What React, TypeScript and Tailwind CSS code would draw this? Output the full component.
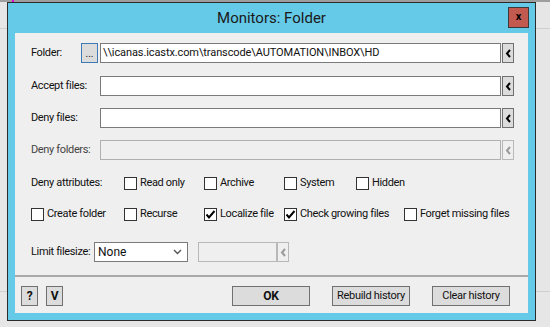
import React from 'react'

const FONT = { fontFamily: 'Roboto, "Liberation Sans", sans-serif' }

function Arrow({ disabled }: { disabled?: boolean }) {
  return (
    <div className={`w-[12px] h-[20px] shrink-0 flex items-center justify-center border ${disabled ? 'border-[#b8b8b8] bg-[#efefef]' : 'border-[#707070] bg-[#dcdcdc]'}`}>
      <svg width="7" height="9" viewBox="0 0 7 9">
        <path d="M5 1 L2 4.5 L5 8" fill="none" stroke={disabled ? '#9a9a9a' : '#000'} strokeWidth="2" />
      </svg>
    </div>
  )
}

function Check({ label, checked, w }: { label: string; checked?: boolean; w: string }) {
  return (
    <div className={`flex items-center gap-[3px] shrink-0 ${w}`}>
      <div className="w-[13px] h-[13px] border border-[#333] bg-white flex items-center justify-center shrink-0">
        {checked && (
          <svg width="11" height="11" viewBox="0 0 11 11">
            <path d="M1.5 5.5 L4 8.5 L9.5 2" fill="none" stroke="#000" strokeWidth="2" />
          </svg>
        )}
      </div>
      <span className="text-[11px] tracking-[-0.35px] text-[#111] whitespace-nowrap">{label}</span>
    </div>
  )
}

function FieldRow({ label, disabled, mt }: { label: string; disabled?: boolean; mt: string }) {
  return (
    <div className={`flex items-center h-[20px] ${mt}`}>
      <span className={`w-[69px] shrink-0 text-[11px] tracking-[-0.35px] whitespace-nowrap ${disabled ? 'text-[#444]' : 'text-[#111]'}`}>{label}</span>
      <div className={`w-[401px] h-[20px] shrink-0 border ${disabled ? 'border-[#b0b0b0] bg-[#efefef]' : 'border-[#7a7a7a] bg-white'}`} />
      <div className="ml-[1px]">
        <Arrow disabled={disabled} />
      </div>
    </div>
  )
}

function Btn({ children, w, bold }: { children: React.ReactNode; w: string; bold?: boolean }) {
  return (
    <div className={`${w} h-[20px] shrink-0 border border-[#707070] bg-[#dcdcdc] flex items-center justify-center whitespace-nowrap text-[11px] tracking-[-0.3px] text-[#111] ${bold ? 'font-bold text-[12px]' : ''}`}>
      {children}
    </div>
  )
}

export default function App() {
  return (
    <div className="w-[550px] h-[327px] bg-[#e6e6e6] overflow-hidden relative" style={FONT}>
      {/* sheet behind the dialog */}
      <div className="h-[2px] bg-[#9e9e9e] flex">
        <div className="ml-[12px] w-[2px] bg-[#e000e0]" />
      </div>
      <div className="absolute left-0 top-[28px] w-[550px] h-[1px] bg-[#cfcfcf]" />
      <div className="absolute left-0 top-[291px] w-[550px] h-[1px] bg-[#cfcfcf]" />

      {/* dialog window */}
      <div className="absolute left-[7px] top-[2px] w-[529px] h-[319px] border border-[#2b2b2b] bg-[#65c9e8] flex flex-col">
        <div className="h-[30px] flex items-center relative">
          <span className="w-full text-center text-[15px] text-[#1a1a1a] pt-[1px]">Monitors: Folder</span>
          <div className="absolute right-[6px] top-[4px] w-[21px] h-[21px] bg-[#c35a50] border border-[#3a3a3a] flex items-center justify-center">
            <span className="text-[11px] font-bold text-black leading-none -mt-[2px]">x</span>
          </div>
        </div>
        <div className="mx-[7px] w-[513px] h-[280px] bg-[#efefef] flex flex-col">
          <div className="pl-[16px] flex flex-col">
            {/* folder row */}
            <div className="flex items-center h-[20px] mt-[10px]">
              <span className="w-[50px] shrink-0 text-[11px] tracking-[-0.35px] text-[#111]">Folder:</span>
              <div className="w-[17px] h-[20px] shrink-0 border border-[#3d7ab8] bg-[#dcdcdc] flex items-end justify-center pb-[3px] text-[10px] leading-none text-[#111]">...</div>
              <div className="ml-[2px] w-[401px] h-[20px] shrink-0 border border-[#7a7a7a] bg-white flex items-center px-[2px] text-[11px] tracking-[-0.1px] text-[#111] whitespace-nowrap">
                \\icanas.icastx.com\transcode\AUTOMATION\INBOX\HD
              </div>
              <div className="ml-[1px]">
                <Arrow />
              </div>
            </div>
            <FieldRow label="Accept files:" mt="mt-[13px]" />
            <FieldRow label="Deny files:" mt="mt-[12px]" />
            <FieldRow label="Deny folders:" mt="mt-[12px]" disabled />

            {/* attributes */}
            <div className="flex items-center h-[13px] mt-[17px]">
              <span className="w-[93px] shrink-0 text-[11px] tracking-[-0.35px] text-[#111] whitespace-nowrap">Deny attributes:</span>
              <Check label="Read only" w="w-[80px]" />
              <Check label="Archive" w="w-[80px]" />
              <Check label="System" w="w-[72px]" />
              <Check label="Hidden" w="w-[80px]" />
            </div>
            <div className="flex items-center h-[13px] mt-[18px]">
              <Check label="Create folder" w="w-[93px]" />
              <Check label="Recurse" w="w-[80px]" />
              <Check label="Localize file" checked w="w-[80px]" />
              <Check label="Check growing files" checked w="w-[120px]" />
              <Check label="Forget missing files" w="w-[120px]" />
            </div>

            {/* limit filesize */}
            <div className="flex items-center h-[20px] mt-[21px]">
              <span className="w-[63px] shrink-0 text-[11px] tracking-[-0.35px] text-[#111] whitespace-nowrap">Limit filesize:</span>
              <div className="w-[94px] h-[20px] shrink-0 border border-[#7a7a7a] bg-white flex items-center justify-between pl-[3px] pr-[5px] text-[12px] text-[#111]">
                <span>None</span>
                <svg width="9" height="6" viewBox="0 0 9 6">
                  <path d="M1 1 L4.5 4.5 L8 1" fill="none" stroke="#555" strokeWidth="1.4" />
                </svg>
              </div>
              <div className="ml-[10px] w-[79px] h-[20px] shrink-0 border border-[#b8b8b8] bg-[#efefef]" />
              <Arrow disabled />
            </div>
          </div>

          {/* footer */}
          <div className="mt-[13px] h-[2px] bg-[#a9a9a9]" />
          <div className="flex items-center mt-[9px] pl-[6px]">
            <Btn w="w-[17px]" bold>?</Btn>
            <div className="ml-[8px]"><Btn w="w-[17px]" bold>V</Btn></div>
            <div className="ml-[169px]"><Btn w="w-[78px]" bold>OK</Btn></div>
            <div className="ml-[22px]"><Btn w="w-[78px]">Rebuild history</Btn></div>
            <div className="ml-[22px]"><Btn w="w-[78px]">Clear history</Btn></div>
          </div>
        </div>
      </div>
    </div>
  )
}
